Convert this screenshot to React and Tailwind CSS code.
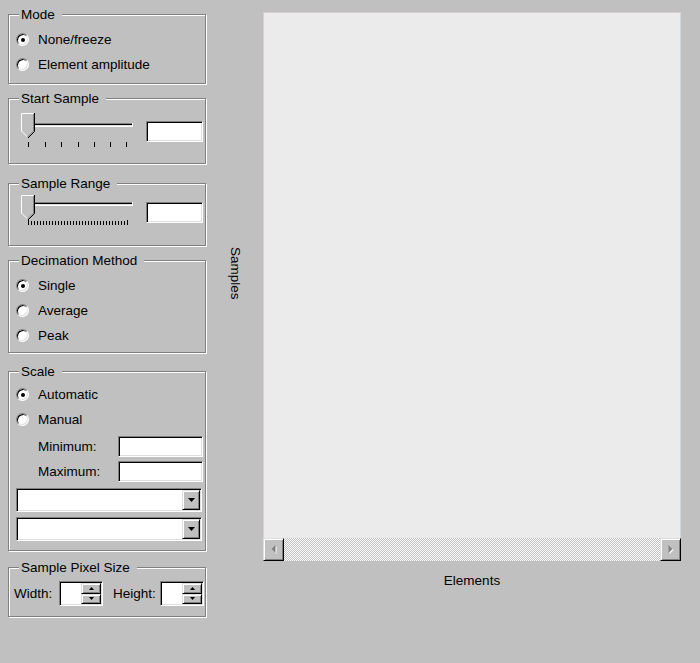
import React from "react";

const sunken =
  "border border-t-[#808080] border-l-[#808080] border-r-white border-b-white bg-white shadow-[inset_1px_1px_0_#000,inset_-1px_-1px_0_#dfdfdf]";
const raised =
  "bg-[#c0c0c0] border border-t-[#dfdfdf] border-l-[#dfdfdf] border-r-black border-b-black shadow-[inset_1px_1px_0_#fff,inset_-1px_-1px_0_#808080]";

function Group({ label, className = "", children }) {
  return (
    <div
      className={`relative w-[198px] border border-[#808080] shadow-[inset_1px_1px_0_#fff,1px_1px_0_#fff] ${className}`}
    >
      <span className="absolute left-[10px] -top-[8px] pl-[2px] pr-[7px] bg-[#c0c0c0] leading-[16px] whitespace-nowrap">
        {label}
      </span>
      {children}
    </div>
  );
}

function Radio({ checked, label }) {
  return (
    <div className="flex items-center h-[25px]">
      <span className="w-[13px] h-[13px] rounded-full bg-white border border-t-[#808080] border-l-[#808080] border-r-white border-b-white shadow-[inset_1px_1px_0_#000,inset_-1px_-1px_0_#dfdfdf] flex items-center justify-center shrink-0">
        {checked && <span className="w-[4px] h-[4px] rounded-full bg-black" />}
      </span>
      <span className="ml-[9px] leading-[16px] whitespace-nowrap">{label}</span>
    </div>
  );
}

function Thumb({ top }) {
  const t = top;
  const b = top + 18;
  const p = b + 6.5;
  return (
    <g>
      <polygon points={`5,${t} 18,${t} 18,${b} 11.5,${p} 5,${b}`} fill="#c0c0c0" />
      <polyline points={`5.5,${b} 5.5,${t + 0.5} 17.5,${t + 0.5}`} fill="none" stroke="#fff" />
      <polyline points={`5.5,${b} 11.5,${p - 0.5}`} fill="none" stroke="#fff" />
      <polyline points={`18.5,${t} 18.5,${b + 0.5} 12,${p + 0.5}`} fill="none" stroke="#000" />
      <polyline points={`17.5,${t + 1} 17.5,${b} 11.5,${p - 0.5}`} fill="none" stroke="#808080" />
    </g>
  );
}

function Channel({ y }) {
  return (
    <g>
      <line x1="8" y1={y + 0.5} x2="117" y2={y + 0.5} stroke="#808080" />
      <line x1="8" y1={y + 1.5} x2="116" y2={y + 1.5} stroke="#000" />
      <line x1="8" y1={y + 2.5} x2="116" y2={y + 2.5} stroke="#dfdfdf" />
      <line x1="8" y1={y + 3.5} x2="117" y2={y + 3.5} stroke="#fff" />
      <line x1="116.5" y1={y} x2="116.5" y2={y + 4} stroke="#fff" />
    </g>
  );
}

function StartSlider() {
  const ticks = [12, 29, 45, 62, 78, 94, 110];
  return (
    <svg width="120" height="38" viewBox="0 0 120 38" className="block shrink-0">
      <Channel y={13} />
      <Thumb top={3} />
      {ticks.map((x) => (
        <rect key={x} x={x} y="32" width="1" height="5" fill="#000" />
      ))}
    </svg>
  );
}

function RangeSlider() {
  const ticks = [];
  for (let x = 12; x <= 111; x += 3) ticks.push(x);
  return (
    <svg width="120" height="36" viewBox="0 0 120 36" className="block shrink-0">
      <Channel y={10} />
      <Thumb top={3} />
      {ticks.map((x) => (
        <rect key={x} x={x} y="29" width="1" height="4" fill="#000" />
      ))}
      <rect x="12" y="28" width="1" height="5" fill="#000" />
      <rect x="111" y="28" width="1" height="5" fill="#000" />
    </svg>
  );
}

function Edit({ className = "" }) {
  return <div className={`${sunken} ${className}`} />;
}

function Combo({ className = "" }) {
  return (
    <div className={`${sunken} w-[186px] h-[24px] flex justify-end p-[1px] ${className}`}>
      <div className={`${raised} w-[18px] h-full flex items-center justify-center`}>
        <svg width="7" height="4" viewBox="0 0 7 4" className="block">
          <polygon points="0,0 7,0 3.5,4" fill="#000" />
        </svg>
      </div>
    </div>
  );
}

function Spin({ className = "" }) {
  return (
    <div className={`${sunken} h-[25px] flex justify-end p-[1px] ${className}`}>
      <div className="w-[20px] h-full flex flex-col">
        <div className={`${raised} flex-1 flex items-center justify-center`}>
          <svg width="5" height="3" viewBox="0 0 5 3" className="block">
            <polygon points="2.5,0 5,3 0,3" fill="#000" />
          </svg>
        </div>
        <div className={`${raised} flex-1 flex items-center justify-center`}>
          <svg width="5" height="3" viewBox="0 0 5 3" className="block">
            <polygon points="0,0 5,0 2.5,3" fill="#000" />
          </svg>
        </div>
      </div>
    </div>
  );
}

function ScrollButton({ dir }) {
  return (
    <div className={`${raised} w-[21px] h-full flex items-center justify-center shrink-0`}>
      <svg width="6" height="9" viewBox="0 0 6 9" className="block">
        {dir === "left" ? (
          <>
            <polygon points="5.5,1 5.5,9 1.5,5" fill="#fff" />
            <polygon points="4.5,0 4.5,8 0.5,4" fill="#808080" />
          </>
        ) : (
          <>
            <polygon points="1.5,1 1.5,9 5.5,5" fill="#fff" />
            <polygon points="0.5,0 0.5,8 4.5,4" fill="#808080" />
          </>
        )}
      </svg>
    </div>
  );
}

export default function App() {
  return (
    <div className="w-[700px] h-[663px] bg-[#c0c0c0] flex overflow-hidden text-black text-[13.5px] font-['Liberation_Sans',Arial,sans-serif]">
      {/* Left control column */}
      <div className="w-[207px] shrink-0 pl-[8px] pt-[14px] flex flex-col">
        <Group label="Mode" className="h-[70px]">
          <div className="pl-[7px] pt-[12px] flex flex-col">
            <Radio checked label="None/freeze" />
            <Radio label="Element amplitude" />
          </div>
        </Group>

        <Group label="Start Sample" className="h-[66px] mt-[14px]">
          <div className="pl-[7px] pt-[11px] flex items-start">
            <StartSlider />
            <Edit className="w-[57px] h-[21px] ml-[10px] mt-[11px]" />
          </div>
        </Group>

        <Group label="Sample Range" className="h-[63px] mt-[19px]">
          <div className="pl-[7px] pt-[8px] flex items-start">
            <RangeSlider />
            <Edit className="w-[57px] h-[21px] ml-[10px] mt-[10px]" />
          </div>
        </Group>

        <Group label="Decimation Method" className="h-[93px] mt-[14px]">
          <div className="pl-[7px] pt-[12px] flex flex-col">
            <Radio checked label="Single" />
            <Radio label="Average" />
            <Radio label="Peak" />
          </div>
        </Group>

        <Group label="Scale" className="h-[180px] mt-[18px]">
          <div className="pl-[7px] pt-[10px] flex flex-col">
            <Radio checked label="Automatic" />
            <Radio label="Manual" />
            <div className="flex items-center mt-[4px] pl-[22px]">
              <span className="w-[80px] leading-[16px]">Minimum:</span>
              <Edit className="w-[85px] h-[21px]" />
            </div>
            <div className="flex items-center mt-[4px] pl-[22px]">
              <span className="w-[80px] leading-[16px]">Maximum:</span>
              <Edit className="w-[85px] h-[21px]" />
            </div>
            <Combo className="mt-[6px]" />
            <Combo className="mt-[5px]" />
          </div>
        </Group>

        <Group label="Sample Pixel Size" className="h-[50px] mt-[16px]">
          <div className="pl-[5px] pt-[13px] flex items-center">
            <span className="w-[45px] leading-[16px]">Width:</span>
            <Spin className="w-[44px]" />
            <span className="ml-[10px] w-[47px] leading-[16px]">Height:</span>
            <Spin className="w-[44px]" />
          </div>
        </Group>
      </div>

      {/* Vertical axis label */}
      <div className="w-[56px] shrink-0 pt-[12px]">
        <div className="h-[522px] flex items-center justify-center">
          <span className="[writing-mode:vertical-rl] leading-[16px]">Samples</span>
        </div>
      </div>

      {/* Plot column */}
      <div className="w-[418px] shrink-0 pt-[12px] flex flex-col">
        <div className="h-[526px] bg-[#ebebeb] border-t border-l border-[#d6cfd3] border-r border-r-[#cdd9df]" />
        <div className="h-[23px] flex">
          <ScrollButton dir="left" />
          <div className="flex-1 bg-[repeating-conic-gradient(#c0c0c0_0%_25%,#ffffff_0%_50%)] bg-[length:2px_2px]" />
          <ScrollButton dir="right" />
        </div>
        <div className="mt-[12px] text-center leading-[16px]">Elements</div>
      </div>
    </div>
  );
}
